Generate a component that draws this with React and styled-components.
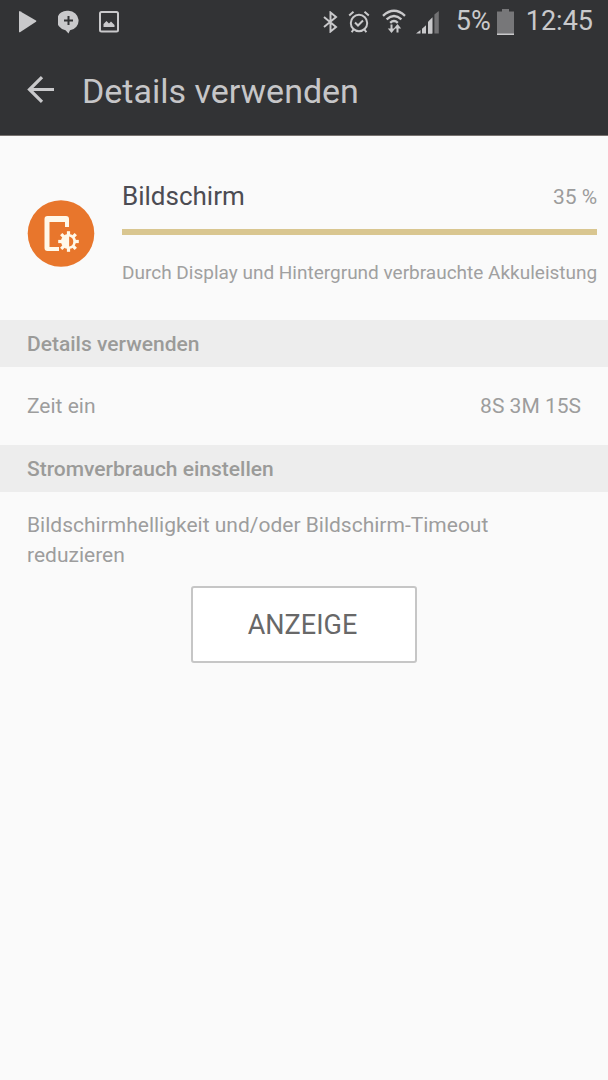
import React from 'react';
import styled, { createGlobalStyle } from 'styled-components';

const GlobalStyle = createGlobalStyle`
  body {
    margin: 0;
    background-color: #fafafa;
    font-family: Roboto, sans-serif;
  }
`;

const Screen = styled.div`
  width: 608px;
  height: 1080px;
  overflow: hidden;
  background-color: #fafafa;
`;

const Header = styled.header`
  height: 136px;
  background-color: #323335;
  border-bottom: 1px solid #77726f;
  box-sizing: border-box;
`;

const StatusBar = styled.div`
  display: flex;
  justify-content: space-between;
  height: 43px;
  padding: 0 15px 0 18px;
  color: #c9c9cb;
`;

const StatusGroup = styled.div`
  display: flex;
  align-items: center;
`;

const StatusIcon = styled.svg`
  display: block;
  flex: none;
  margin-left: ${({ $gap }) => $gap || 0}px;
`;

const StatusText = styled.span`
  font-size: 27px;
  line-height: 43px;
  letter-spacing: ${({ $spacing }) => $spacing || 0}px;
  margin-left: ${({ $gap }) => $gap}px;
`;

const TitleBar = styled.div`
  display: flex;
  height: 92px;
  padding-left: 27px;
`;

const BackButton = styled.button`
  width: 28px;
  height: 28px;
  margin: 33px 27px 0 0;
  padding: 0;
  border: 0;
  background: none;
  color: #c9c9cb;
`;

const Title = styled.h1`
  margin: 0;
  font-size: 34px;
  font-weight: 400;
  line-height: 96px;
  letter-spacing: ${({ $spacing }) => $spacing || 0}px;
  color: #c6c6c8;
`;

const Summary = styled.section`
  display: flex;
  height: 184px;
  padding: 0 27px;
  box-sizing: border-box;
`;

const AppIcon = styled.svg`
  display: block;
  flex: none;
  margin: 64px 27px 0 0;
`;

const SummaryBody = styled.div`
  flex: 1;
  padding-top: 42px;
`;

const SummaryTop = styled.div`
  display: flex;
  justify-content: space-between;
  height: 51px;
  line-height: 36px;
`;

const Name = styled.div`
  font-size: 26px;
  color: #4c4c53;
  letter-spacing: 0;
`;

const Percent = styled.div`
  font-size: 21px;
  line-height: 38px;
  color: #9c9c9c;
`;

const Bar = styled.div`
  height: 6px;
  background-color: #d9c690;
`;

const Description = styled.div`
  margin-top: 25px;
  font-size: 19px;
  line-height: 26px;
  white-space: nowrap;
  color: #a0a0a0;
`;

const SectionTitle = styled.h2`
  height: 47px;
  margin: 0;
  padding: 0 27px;
  background-color: #ededed;
  font-size: 21px;
  font-weight: 500;
  line-height: 49px;
  color: #9b9b99;
`;

const Row = styled.div`
  display: flex;
  justify-content: space-between;
  height: 78px;
  padding: 0 27px;
  font-size: 21px;
  line-height: 79px;
  color: #9d9d9d;
`;

const Hint = styled.p`
  margin: 0;
  padding: 18px 27px 0;
  font-size: 21px;
  line-height: 30px;
  color: #9d9d9d;
`;

const Button = styled.button`
  display: block;
  width: 226px;
  height: 77px;
  margin: 16px auto 0;
  padding: 0 3px 0 0;
  border: 2px solid #c6c6c6;
  border-radius: 3px;
  background-color: #fff;
  font-family: inherit;
  font-size: 27px;
  color: #686868;
`;

const TEETH = [0, 45, 90, 135, 180, 225, 270, 315];

function Clock() {
  return (
    <StatusIcon $gap={10} width="22" height="24" viewBox="0 0 22 24" fill="none" stroke="currentColor" strokeWidth="2">
      <circle cx="11" cy="13" r="8.2" />
      <path d="M7 12.5l3 3 5-5M1.2 5.5l4.3-3.8M20.8 5.5l-4.3-3.8M5.5 19.5l-1.8 2.8M16.5 19.5l1.8 2.8" />
    </StatusIcon>
  );
}

function Wifi() {
  return (
    <StatusIcon $gap={12} width="24" height="25" viewBox="0 0 24 25" fill="none" stroke="currentColor" strokeWidth="2.4">
      <path d="M1 6.8Q12-3.2 23 6.8M4.6 10.4Q12 3.8 19.4 10.4M8.2 13.8Q12 10.4 15.8 13.8" />
      <path d="M9.5 15.5v6M15.5 23.5v-6" strokeWidth="2" />
      <path d="M5.8 19.5h7.4l-3.7 4.5zM11.8 19.5h7.4L15.5 15z" fill="currentColor" stroke="none" />
    </StatusIcon>
  );
}

function Signal() {
  return (
    <StatusIcon $gap={10} width="24" height="24" viewBox="0 0 24 24" fill="currentColor">
      <path d="M0 23.5h4.5V20zM6 18.8l4-3.5v8.2H6zM12 13.2l4-3.8v14.1h-4z" />
      <path d="M12 11.8l4.5-4.5v16.2H12z" />
      <path d="M18.4 4.6L22.8 1v22.5h-4.4z" fill="#727274" />
    </StatusIcon>
  );
}

function ScreenIcon() {
  return (
    <AppIcon width="68" height="68" viewBox="0 0 68 68">
      <circle cx="34" cy="33.5" r="33.3" fill="#e8762c" />
      <path d="M40.5 22.5v-3.5H20v28h8.5" transform="translate(-.2 -.5)" fill="none" stroke="#fff8e9" strokeWidth="0" />
      <path
        fill="#fff8e9"
        d="M20.5 16H39a3 3 0 0 1 3 3v8h-4v-5H22.500v25H32v4H20.500a3 3 0 0 1-3-3V19a3 3 0 0 1 3-3z"
      />
      <g transform="translate(41.500 41.500)">
        {TEETH.map((angle) => (
          <rect key={angle} x="-1.600" y="-10.300" width="3.200" height="5" fill="#fff8e9" transform={`rotate(${angle})`} />
        ))}
        <circle r="7.500" fill="#fff8e9" />
        <path d="M.6-5.100a5.200 5.200 0 0 1 0 10.200z" fill="#e8762c" />
      </g>
    </AppIcon>
  );
}

function App() {
  return (
    <>
      <GlobalStyle />
      <Screen>
        <Header>
          <StatusBar>
            <StatusGroup>
              <StatusIcon width="20" height="24" viewBox="0 0 20 24" fill="currentColor">
                <path d="M1 1.500Q1 .8 2 1.300l16 9.300q.9.600 0 1.200L2 22.200q-1 .5-1-.5z" />
              </StatusIcon>
              <StatusIcon $gap={20} width="21" height="24" viewBox="0 0 21 24" fill="currentColor">
                <path d="M10.500.8a10 9.800 0 0 1 1.500 19.500L10.500 23.500 7.500 20.200A10 9.800 0 0 1 10.500.8z" />
                <path d="M10.500 6v9M6 10.500h9" fill="none" stroke="#323335" strokeWidth="2" />
              </StatusIcon>
              <StatusIcon $gap={20} width="20" height="22" viewBox="0 0 20 22">
                <rect x="1" y="1" width="18" height="19.500" rx="1.500" fill="none" stroke="currentColor" strokeWidth="2" />
                <path d="M4.500 16v-3l3-3 2.500 2.500 2-2 3.500 3.500v2z" fill="currentColor" />
              </StatusIcon>
            </StatusGroup>
            <StatusGroup>
              <StatusIcon width="15" height="22" viewBox="0 0 15 22" fill="none" stroke="currentColor" strokeWidth="2">
                <path d="M1 6l12 10-5.500 4.500V1.500L13 6 1 16" />
              </StatusIcon>
              <Clock />
              <Wifi />
              <Signal />
              <StatusText $gap={16}>5%</StatusText>
              <StatusIcon $gap={6} width="17" height="26" viewBox="0 0 17 26">
                <path d="M0 2.500h5V0h7v2.500h5V26H0z" fill="#777779" />
                <path d="M0 24.500h17V26H0z" fill="#c9c9cb" />
              </StatusIcon>
              <StatusText $gap={12}>12:45</StatusText>
            </StatusGroup>
          </StatusBar>
          <TitleBar>
            <BackButton aria-label="Zurück">
              <svg width="28" height="28" viewBox="0 0 28 28" fill="none" stroke="currentColor" strokeWidth="3.200">
                <path d="M27 13.500H2.500M15 1.200L2.500 13.500 15 25.800" />
              </svg>
            </BackButton>
            <Title>Details verwenden</Title>
          </TitleBar>
        </Header>
        <Summary>
          <ScreenIcon />
          <SummaryBody>
            <SummaryTop>
              <Name>Bildschirm</Name>
              <Percent>35 %</Percent>
            </SummaryTop>
            <Bar />
            <Description>Durch Display und Hintergrund verbrauchte Akkuleistung</Description>
          </SummaryBody>
        </Summary>
        <SectionTitle>Details verwenden</SectionTitle>
        <Row>
          <span>Zeit ein</span>
          <span>8S 3M 15S</span>
        </Row>
        <SectionTitle>Stromverbrauch einstellen</SectionTitle>
        <Hint>
          Bildschirmhelligkeit und/oder Bildschirm-Timeout
          <br />
          reduzieren
        </Hint>
        <Button>ANZEIGE</Button>
      </Screen>
    </>
  );
}

export default App;
